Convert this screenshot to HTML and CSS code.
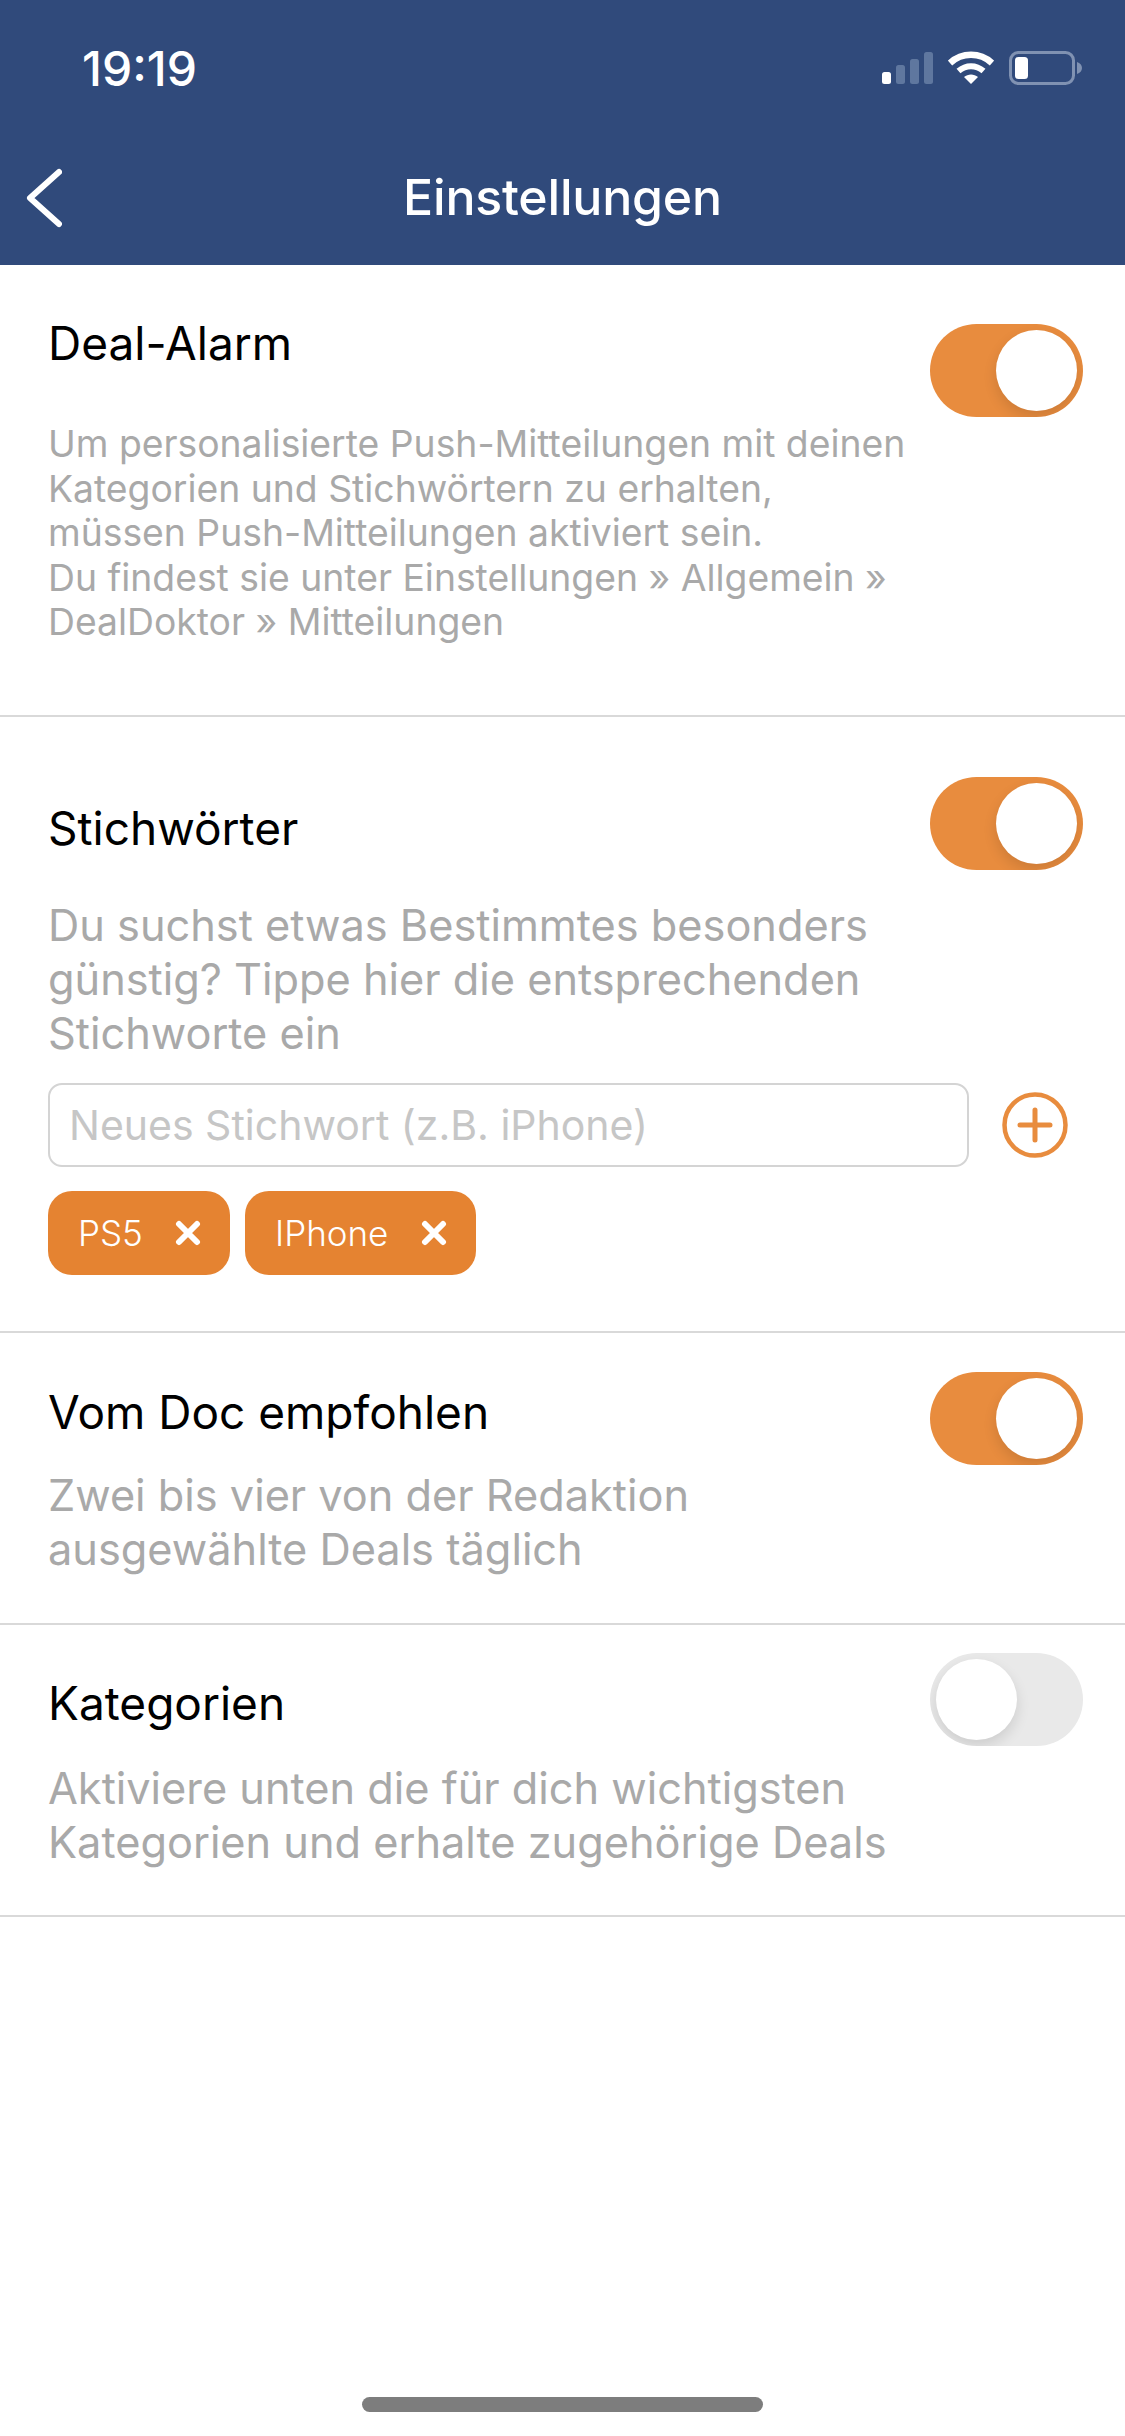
FILE: index.html
```html
<!DOCTYPE html>
<html lang="de">
<head>
  <meta charset="UTF-8">
  <meta name="viewport" content="width=device-width, initial-scale=1.0">
  <title>Einstellungen</title>
  <link rel="stylesheet" href="styles.css">
</head>
<body>
  <div class="phone">
    <header class="header">
      <div class="status">
        <span class="time">19:19</span>
        <div class="status-icons">
          <svg width="52" height="34" viewBox="0 0 52 34">
            <rect x="1" y="21" width="9" height="12" rx="2.5" fill="#fff"/>
            <rect x="15" y="14" width="9" height="19" rx="2.5" fill="#5f779f"/>
            <rect x="29" y="8" width="9" height="25" rx="2.5" fill="#5f779f"/>
            <rect x="43" y="1" width="9" height="32" rx="2.5" fill="#5f779f"/>
          </svg>
          <svg width="46" height="34" viewBox="0 0 46 34">
            <path d="M2 12 C14 1 32 1 44 12" fill="none" stroke="#fff" stroke-width="6.5"/>
            <path d="M10.5 20 C18 13.5 28 13.5 35.5 20" fill="none" stroke="#fff" stroke-width="6"/>
            <path d="M16 26 C20 22.5 26 22.5 30 26 L23 33 Z" fill="#fff"/>
          </svg>
          <svg width="74" height="34" viewBox="0 0 74 34">
            <rect x="1.5" y="1.5" width="63" height="31" rx="8" fill="none" stroke="#8092b2" stroke-width="3"/>
            <rect x="6" y="6" width="13" height="22" rx="3.5" fill="#fff"/>
            <path d="M68 11 C71 12 73 14 73 17 C73 20 71 22 68 23 Z" fill="#8092b2"/>
          </svg>
        </div>
      </div>
      <div class="navbar">
        <svg class="back" width="36" height="60" viewBox="0 0 36 60">
          <path d="M33 4 L4 30 L33 56" fill="none" stroke="#fff" stroke-width="6" stroke-linecap="round" stroke-linejoin="round"/>
        </svg>
        <span class="navbar-title">Einstellungen</span>
      </div>
    </header>

    <section class="section section-alarm">
      <div class="row">
        <h2 class="title">Deal-Alarm</h2>
        <div class="toggle on"><div class="knob"></div></div>
      </div>
      <p class="hint">Um personalisierte Push-Mitteilungen mit deinen<br>Kategorien und Stichwörtern zu erhalten,<br>müssen Push-Mitteilungen aktiviert sein.<br>Du findest sie unter Einstellungen » Allgemein »<br>DealDoktor » Mitteilungen</p>
    </section>

    <section class="section section-keywords">
      <div class="row">
        <h2 class="title">Stichwörter</h2>
        <div class="toggle on"><div class="knob"></div></div>
      </div>
      <p class="desc">Du suchst etwas Bestimmtes besonders<br>günstig? Tippe hier die entsprechenden<br>Stichworte ein</p>
      <div class="add-row">
        <div class="keyword-input">Neues Stichwort (z.B. iPhone)</div>
        <svg class="add" width="66" height="66" viewBox="0 0 66 66">
          <circle cx="33" cy="33" r="30.5" fill="none" stroke="#e88c3e" stroke-width="4.5"/>
          <path d="M33 18 V48 M18 33 H48" fill="none" stroke="#e88c3e" stroke-width="5" stroke-linecap="round"/>
        </svg>
      </div>
      <div class="chips">
        <div class="chip chip-ps5">PS5
          <svg width="26" height="26" viewBox="0 0 26 26"><path d="M4 4 L22 22 M22 4 L4 22" stroke="#fff" stroke-width="6" stroke-linecap="round"/></svg>
        </div>
        <div class="chip chip-iphone">IPhone
          <svg width="26" height="26" viewBox="0 0 26 26"><path d="M4 4 L22 22 M22 4 L4 22" stroke="#fff" stroke-width="6" stroke-linecap="round"/></svg>
        </div>
      </div>
    </section>

    <section class="section section-doc">
      <div class="row">
        <h2 class="title">Vom Doc empfohlen</h2>
        <div class="toggle on"><div class="knob"></div></div>
      </div>
      <p class="desc">Zwei bis vier von der Redaktion<br>ausgewählte Deals täglich</p>
    </section>

    <section class="section section-cats">
      <div class="row">
        <h2 class="title">Kategorien</h2>
        <div class="toggle"><div class="knob"></div></div>
      </div>
      <p class="desc">Aktiviere unten die für dich wichtigsten<br>Kategorien und erhalte zugehörige Deals</p>
    </section>

    <div class="home-bar"></div>
  </div>
</body>
</html>
```

FILE: styles.css
```css
* {
  box-sizing: border-box;
}

body {
  margin: 0;
  background: #fff;
  font-family: 'Inter', 'Liberation Sans', sans-serif;
}

.phone {
  position: relative;
  width: 1125px;
  height: 2436px;
  overflow: hidden;
  background: #fff;
}

.header {
  height: 265px;
  background: #304a7b;
  color: #fff;
}

.status {
  display: flex;
  justify-content: space-between;
  align-items: center;
  height: 68px;
  padding: 34px 42px 0 82px;
  box-sizing: content-box;
}

.time {
  font-size: 48px;
  font-weight: 500;
}

.status-icons {
  display: flex;
  align-items: center;
  gap: 15px;
}

.navbar {
  position: relative;
  display: flex;
  justify-content: center;
  align-items: center;
  height: 72px;
  margin-top: 59px;
}

.back {
  position: absolute;
  left: 26px;
  top: 7px;
}

.navbar-title {
  font-size: 50px;
  font-weight: 500;
  letter-spacing: -0.2px;
}

.section {
  border-bottom: 2px solid #d9d9d9;
  padding: 0 42px 0 48px;
}

.section-alarm {
  height: 452px;
  padding-top: 59px;
}

.section-keywords {
  height: 616px;
  padding-top: 60px;
}

.section-doc {
  height: 292px;
  padding-top: 39px;
}

.section-cats {
  height: 292px;
  padding-top: 28px;
}

.row {
  display: flex;
  justify-content: space-between;
  align-items: flex-start;
}

.title {
  margin: 0;
  font-size: 46px;
  font-weight: 400;
  line-height: 60px;
  color: #000;
}

.section-alarm .title {
  margin-top: -11px;
}

.section-keywords .title {
  margin-top: 21px;
}

.section-doc .title {
  margin-top: 10px;
}

.section-cats .title {
  margin-top: 20px;
}

.toggle {
  position: relative;
  width: 153px;
  height: 93px;
  overflow: hidden;
  border-radius: 47px;
  background: #e88c3e;
}

.toggle .knob {
  position: absolute;
  top: 6px;
  left: 6px;
  width: 81px;
  height: 81px;
  border-radius: 50%;
  background: #fff;
  box-shadow: 0 6px 14px rgba(0, 0, 0, 0.12);
}

.toggle.on .knob {
  left: 66px;
}

.toggle:not(.on) {
  background: #e9e9e9;
}

.hint {
  margin: 5px 0 0;
  font-size: 37.3px;
  line-height: 44.6px;
  color: #a9a9a9;
}

.desc {
  margin: 28px 0 0;
  font-size: 43.3px;
  line-height: 54px;
  color: #a9a9a9;
}

.section-doc .desc {
  margin-top: 3px;
}

.section-cats .desc {
  margin-top: 15px;
}

.add-row {
  display: flex;
  align-items: center;
  margin-top: 23px;
}

.keyword-input {
  display: flex;
  align-items: center;
  width: 921px;
  height: 84px;
  padding-left: 19px;
  border: 2px solid #d4d4d4;
  border-radius: 14px;
  font-size: 41px;
  color: #c6c6c6;
}

.add {
  margin-left: 33px;
}

.chips {
  display: flex;
  gap: 15px;
  margin-top: 24px;
}

.chip {
  display: flex;
  align-items: center;
  justify-content: space-between;
  height: 84px;
  padding: 0 29px 0 30px;
  border-radius: 24px;
  background: #e58331;
  color: #fff;
  font-size: 35px;
  font-weight: 300;
}

.chip-ps5 {
  width: 182px;
}

.chip-iphone {
  width: 231px;
}

.home-bar {
  position: absolute;
  left: 362px;
  top: 2397px;
  width: 401px;
  height: 15px;
  border-radius: 8px;
  background: #7d7d7d;
}
```
